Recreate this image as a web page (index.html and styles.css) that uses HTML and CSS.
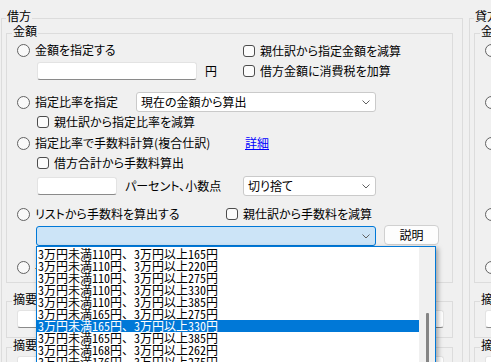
FILE: index.html
```html
<!DOCTYPE html>
<html lang="ja">
  <head>
    <meta charset="UTF-8" />
    <title>手数料設定</title>
    <link rel="stylesheet" href="styles.css">
  </head>
  <body>
    <div class="page">
      <fieldset class="side">
        <legend>借方</legend>
        <fieldset class="box">
          <legend>金額</legend>
          <div class="rows">
            <div class="pair">
              <div>
                <label class="opt"><input type="radio" class="rb" name="d">金額を指定する</label>
                <div class="amount"><input class="tb tb-amount"><span>円</span></div>
              </div>
              <div class="checks">
                <label class="chk"><input type="checkbox" class="cb">親仕訳から指定金額を減算</label>
                <label class="chk"><input type="checkbox" class="cb">借方金額に消費税を加算</label>
              </div>
            </div>
            <div class="ratio">
              <label class="opt"><input type="radio" class="rb" name="d">指定比率を指定</label>
              <div class="combo"><span>現在の金額から算出</span><svg width="8" height="5" viewBox="0 0 8 5"><polyline points="0.5,0.5 4,4 7.5,0.5" fill="none" stroke="#606060"/></svg></div>
            </div>
            <label class="chk indent gap3"><input type="checkbox" class="cb">親仕訳から指定比率を減算</label>
            <div class="multi">
              <label class="opt"><input type="radio" class="rb" name="d">指定比率で手数料計算(複合仕訳)</label>
              <a href="#" class="link">詳細</a>
            </div>
            <label class="chk indent gap6"><input type="checkbox" class="cb">借方合計から手数料算出</label>
            <div class="rate">
              <input class="tb tb-rate">
              <span class="rate-label">パーセント、小数点</span>
              <div class="combo combo-round"><span>切り捨て</span><svg width="8" height="5" viewBox="0 0 8 5"><polyline points="0.5,0.5 4,4 7.5,0.5" fill="none" stroke="#606060"/></svg></div>
            </div>
            <div class="fromlist">
              <label class="opt"><input type="radio" class="rb" name="d">リストから手数料を算出する</label>
              <label class="chk"><input type="checkbox" class="cb">親仕訳から手数料を減算</label>
            </div>
            <div class="list-row">
              <div class="combo-wrap">
                <div class="combo combo-list focus"><span></span><svg width="8" height="5" viewBox="0 0 8 5"><polyline points="0.5,0.5 4,4 7.5,0.5" fill="none" stroke="#606060"/></svg></div>
                <div class="drop">
                  <ul class="items">
                    <li>3万円未満110円、3万円以上165円</li>
                    <li>3万円未満110円、3万円以上220円</li>
                    <li>3万円未満110円、3万円以上275円</li>
                    <li>3万円未満110円、3万円以上330円</li>
                    <li>3万円未満110円、3万円以上385円</li>
                    <li>3万円未満165円、3万円以上275円</li>
                    <li class="sel">3万円未満165円、3万円以上330円</li>
                    <li>3万円未満165円、3万円以上385円</li>
                    <li>3万円未満168円、3万円以上262円</li>
                    <li>3万円未満176円、3万円以上275円</li>
                  </ul>
                  <div class="scroll"><div class="thumb"></div></div>
                </div>
              </div>
              <button class="btn">説明</button>
            </div>
            <label class="opt last"><input type="radio" class="rb" name="d">手数料を計算しない</label>
          </div>
        </fieldset>
        <fieldset class="note">
          <legend>摘要</legend>
          <input class="tb tb-note">
        </fieldset>
        <fieldset class="note note-second">
          <legend>摘要</legend>
          <input class="tb tb-note">
        </fieldset>
      </fieldset>

      <fieldset class="side">
        <legend>貸方</legend>
        <fieldset class="box">
          <legend>金額</legend>
          <div class="rows">
            <div class="pair">
              <div>
                <label class="opt"><input type="radio" class="rb" name="c">金額を指定する</label>
                <div class="amount"><input class="tb tb-amount"><span>円</span></div>
              </div>
              <div class="checks">
                <label class="chk"><input type="checkbox" class="cb">親仕訳から指定金額を減算</label>
                <label class="chk"><input type="checkbox" class="cb">貸方金額に消費税を加算</label>
              </div>
            </div>
            <div class="ratio">
              <label class="opt"><input type="radio" class="rb" name="c">指定比率を指定</label>
              <div class="combo"><span>現在の金額から算出</span><svg width="8" height="5" viewBox="0 0 8 5"><polyline points="0.5,0.5 4,4 7.5,0.5" fill="none" stroke="#606060"/></svg></div>
            </div>
            <label class="chk indent gap3"><input type="checkbox" class="cb">親仕訳から指定比率を減算</label>
            <div class="multi">
              <label class="opt"><input type="radio" class="rb" name="c">指定比率で手数料計算(複合仕訳)</label>
              <a href="#" class="link">詳細</a>
            </div>
            <label class="chk indent gap6"><input type="checkbox" class="cb">貸方合計から手数料算出</label>
            <div class="rate">
              <input class="tb tb-rate">
              <span class="rate-label">パーセント、小数点</span>
              <div class="combo combo-round"><span>切り捨て</span><svg width="8" height="5" viewBox="0 0 8 5"><polyline points="0.5,0.5 4,4 7.5,0.5" fill="none" stroke="#606060"/></svg></div>
            </div>
            <div class="fromlist">
              <label class="opt"><input type="radio" class="rb" name="c">リストから手数料を算出する</label>
              <label class="chk"><input type="checkbox" class="cb">親仕訳から手数料を減算</label>
            </div>
            <div class="list-row">
              <div class="combo-wrap">
                <div class="combo combo-list"><span></span><svg width="8" height="5" viewBox="0 0 8 5"><polyline points="0.5,0.5 4,4 7.5,0.5" fill="none" stroke="#606060"/></svg></div>
              </div>
              <button class="btn">説明</button>
            </div>
            <label class="opt last"><input type="radio" class="rb" name="c">手数料を計算しない</label>
          </div>
        </fieldset>
        <fieldset class="note">
          <legend>摘要</legend>
          <input class="tb tb-note">
        </fieldset>
        <fieldset class="note note-second">
          <legend>摘要</legend>
          <input class="tb tb-note">
        </fieldset>
      </fieldset>
    </div>
  </body>
</html>
```

FILE: styles.css
```css
* {
  box-sizing: border-box;
}
body {
  margin: 0;
  width: 491px;
  height: 362px;
  overflow: hidden;
  background: #f0f0f0;
  font-family: "Noto Sans CJK JP", sans-serif;
  font-size: 12px;
  font-feature-settings: "palt";
  color: #000;
}
.page {
  display: flex;
  gap: 6px;
  width: max-content;
  padding: 11px 0 0 1px;
}
fieldset {
  margin: 0;
  min-width: 0;
  border: 1px solid #dcdcdc;
}
legend {
  padding: 0 1px 5px;
  line-height: 10px;
}
.side {
  flex: none;
  width: 462px;
  padding: 0 9px 0 4px;
}
.box {
  padding: 2px 8px 8px 5px;
}
.rows {
  padding-left: 5px;
  line-height: 14px;
}
.opt,
.chk {
  display: flex;
  align-items: center;
  gap: 5px;
  height: 14px;
  white-space: nowrap;
}
.rb {
  appearance: none;
  flex: none;
  margin: 0;
  width: 13px;
  height: 13px;
  border: 1px solid #626262;
  border-radius: 50%;
  background: #f9f9f9;
}
.cb {
  appearance: none;
  flex: none;
  margin: 0;
  width: 12px;
  height: 12px;
  border: 1px solid #4c4c4c;
  border-radius: 3px;
  background: #fbfbfb;
}
.tb {
  appearance: none;
  margin: 0;
  height: 18px;
  padding: 0 4px;
  border: 1px solid #e3e3e3;
  border-bottom-color: #8a8a8a;
  border-radius: 3px;
  background: #fff;
  font: inherit;
}
.pair {
  display: grid;
  grid-template-columns: 226px auto;
}
.amount {
  display: flex;
  align-items: center;
  gap: 8px;
  margin: 5px 0 0 20px;
}
.tb-amount {
  width: 160px;
}
.checks {
  display: flex;
  flex-direction: column;
  gap: 6px;
  padding-top: 1px;
}
.combo {
  display: flex;
  align-items: center;
  justify-content: space-between;
  height: 20px;
  padding: 0 5px 0 4px;
  border: 1px solid #cacaca;
  border-radius: 3px;
  background: #fff;
}
.combo.focus {
  border-color: #0078d7;
  background: #cce4f7;
}
.ratio {
  display: grid;
  grid-template-columns: 119px 240px;
  align-items: center;
  margin-top: 12px;
}
.indent {
  margin-left: 20px;
}
.gap3 {
  margin-top: 3px;
}
.gap6 {
  margin-top: 6px;
}
.multi {
  display: grid;
  grid-template-columns: 228px auto;
  align-items: center;
  margin-top: 7px;
  height: 14px;
}
.link {
  color: #0000ff;
  text-decoration: underline;
}
.rate {
  display: flex;
  align-items: center;
  height: 20px;
  margin: 6px 0 0 20px;
}
.tb-rate {
  width: 80px;
}
.rate-label {
  width: 126px;
  padding-left: 8px;
}
.combo-round {
  width: 133px;
}
.fromlist {
  display: grid;
  grid-template-columns: 209px auto;
  margin-top: 11px;
}
.list-row {
  display: flex;
  align-items: flex-start;
  gap: 8px;
  margin: 5px 0 0 19px;
}
.combo-wrap {
  position: relative;
}
.combo-list {
  width: 340px;
}
.btn {
  width: 55px;
  height: 20px;
  margin-top: -1px;
  padding: 0;
  border: 1px solid #d0d0d0;
  border-radius: 4px;
  background: #fdfdfd;
  font: inherit;
  line-height: 18px;
  color: #000;
}
.last {
  margin-top: 14px;
}
.drop {
  position: absolute;
  top: 100%;
  left: 0;
  z-index: 5;
  display: grid;
  grid-template-columns: 1fr 16px;
  width: 400px;
  height: 140px;
  border: 1px solid #0078d7;
  background: #fff;
  box-shadow: 2px 2px 5px rgba(0, 0, 0, 0.35);
}
.items {
  margin: 0;
  padding: 1px 0 0;
  list-style: none;
  font-feature-settings: "hwid";
  line-height: 12px;
}
.items li {
  height: 12px;
  padding-left: 1px;
  white-space: nowrap;
}
.items li.sel {
  background: #0078d7;
  color: #fff;
}
.scroll {
  background: #f0f0f0;
  padding-top: 66px;
}
.thumb {
  width: 3px;
  height: 80px;
  margin: 0 auto;
  background: #858585;
  border-radius: 1px;
}
.note {
  margin-top: 11px;
  padding: 1px 8px 9px 5px;
}
.note-second {
  margin-top: 2px;
}
.tb-note {
  display: block;
  width: calc(100% - 5px);
  margin-left: 5px;
}
```
